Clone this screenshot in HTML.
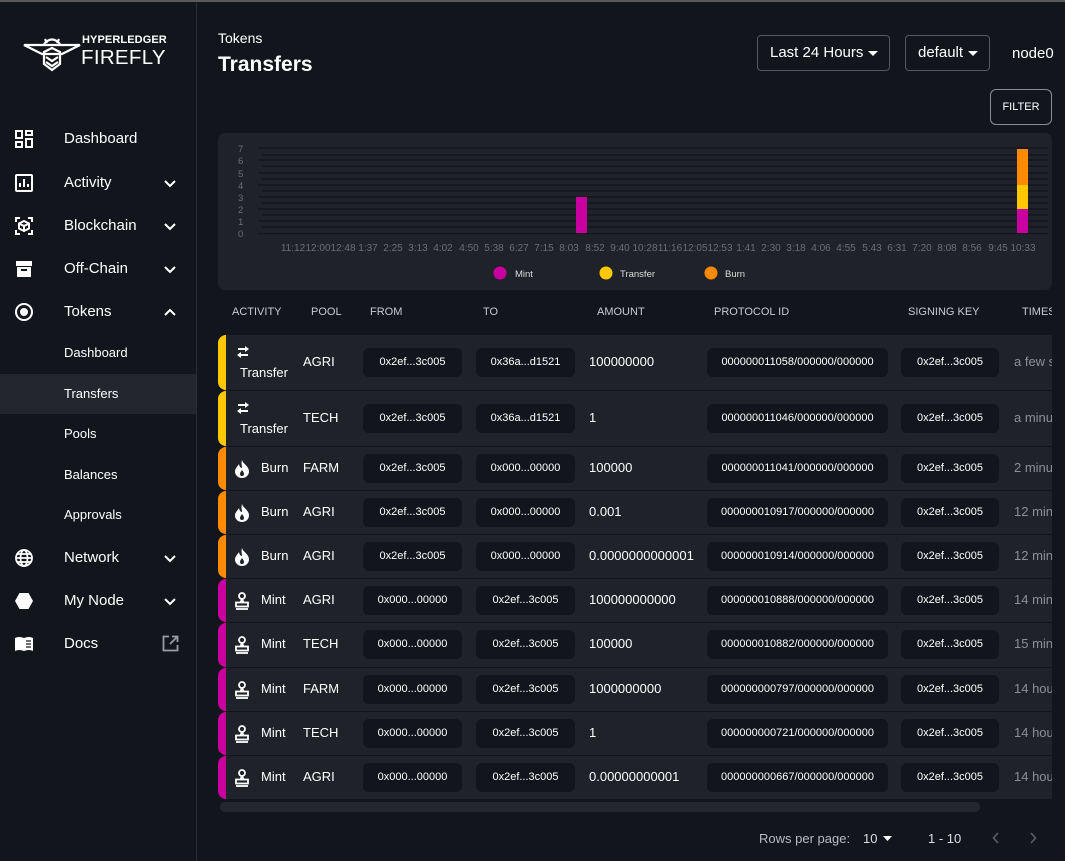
<!DOCTYPE html>
<html><head><meta charset="utf-8"><style>
*{box-sizing:border-box;margin:0;padding:0}
body{width:1065px;height:861px;overflow:hidden;background:#12161c;font-family:"Liberation Sans",sans-serif;color:#fff;position:relative}
.top{position:absolute;left:0;top:0;width:1065px;height:2px;background:#5a5a5a}
.side{position:absolute;left:0;top:2px;width:197px;height:859px;background:#12161c;border-right:1px solid #2a2d33}
.nav{position:absolute;left:0;width:196px;font-size:15px}
.nav .ic{position:absolute;left:14px;top:-9px;width:20px;height:20px}
.nav .lb{position:absolute;left:64px;top:-8px}
.nav .ch{position:absolute;left:163px;top:-6px}
.sub{position:absolute;left:0;width:196px;height:40px;font-size:13px;padding-left:64px;line-height:40px}
.abs{position:absolute}
.btn{position:absolute;border:1px solid #55585e;border-radius:4px;font-size:15px;line-height:34px;padding-left:12px}
.row{position:absolute;left:218px;width:834px;background:#1f2229;border-radius:8px 0 0 8px;overflow:hidden}
.row .bar{position:absolute;left:0;top:0;bottom:0;width:8px}
.chip{position:absolute;background:#12151b;border-radius:6px;height:29px;font-size:11px;text-align:center;line-height:29px}
.hd{position:absolute;top:306px;font-size:11px;color:#c8cad0}
.t{position:absolute;font-size:13px}
.ts{position:absolute;font-size:13px;color:#8c8f95;left:1014px;white-space:nowrap;overflow:hidden;width:38px}
</style></head><body>
<div class="top"></div>
<div class="side">
 <svg class="abs" style="left:22px;top:33px" width="60" height="38" viewBox="0 0 60 38" fill="none" stroke="#fff" stroke-width="2.2">
  <path d="M2 10 L58 10 L40 19 L20 19 Z"/><path d="M22 9 Q30 0 38 9"/><path d="M23 4 L25 8 M37 4 L35 8"/>
  <path d="M22 17 L30 13 L38 17 L38 29 L30 35 L22 29 Z"/><path d="M24 22 L30 26 L36 22 M24 27 L30 31 L36 27"/>
 </svg>
</div>
<div class="abs" style="left:82px;top:34px;font-size:11px;font-weight:bold;letter-spacing:0.1px">HYPERLEDGER</div>
<div class="abs" style="left:81px;top:46px;font-size:20.5px;letter-spacing:0.3px">FIREFLY</div>

<svg width="0" height="0" style="position:absolute"><defs><path id="cd" d="M2 5L7 10L12 5" fill="none" stroke="#fff" stroke-width="2"/><path id="cu" d="M2 10L7 5L12 10" fill="none" stroke="#fff" stroke-width="2"/></defs></svg>

<div class="nav" style="top:138px"><svg class="ic" viewBox="0 0 20 20" fill="none" stroke="#fff" stroke-width="2"><rect x="2" y="2" width="6" height="7"/><rect x="12" y="2" width="6" height="4"/><rect x="2" y="13" width="6" height="5"/><rect x="12" y="10" width="6" height="8"/></svg><span class="lb">Dashboard</span></div>
<div class="nav" style="top:182px"><svg class="ic" viewBox="0 0 20 20" fill="none" stroke="#fff" stroke-width="2"><rect x="2" y="2" width="16" height="16" rx="1"/><path d="M6 14V10M10 14V6M14 14V11"/></svg><span class="lb">Activity</span><svg class="ch" width="14" height="14"><use href="#cd"/></svg></div>
<div class="nav" style="top:225px"><svg class="ic" viewBox="0 0 20 20" fill="none" stroke="#fff" stroke-width="2"><path d="M2 6V2H6M14 2H18V6M2 14V18H6M14 18H18V14"/><path d="M10 5L15 7.5V12.5L10 15L5 12.5V7.5Z M5 7.5L10 10L15 7.5M10 10V15"/></svg><span class="lb">Blockchain</span><svg class="ch" width="14" height="14"><use href="#cd"/></svg></div>
<div class="nav" style="top:268px"><svg class="ic" viewBox="0 0 20 20" fill="#fff"><rect x="2" y="2" width="16" height="5"/><path d="M3 8H17V18H3Z M7 10V12H13V10Z" fill-rule="evenodd"/></svg><span class="lb">Off-Chain</span><svg class="ch" width="14" height="14"><use href="#cd"/></svg></div>
<div class="nav" style="top:311px"><svg class="ic" viewBox="0 0 20 20" fill="none" stroke="#fff" stroke-width="2"><circle cx="10" cy="10" r="8"/><circle cx="10" cy="10" r="3" fill="#fff"/></svg><span class="lb">Tokens</span><svg class="ch" width="14" height="14"><use href="#cu"/></svg></div>
<div class="sub" style="top:333px">Dashboard</div>
<div class="sub" style="top:374px;background:#23262d">Transfers</div>
<div class="sub" style="top:414px">Pools</div>
<div class="sub" style="top:455px">Balances</div>
<div class="sub" style="top:495px">Approvals</div>
<div class="nav" style="top:557px"><svg class="ic" viewBox="0 0 20 20" fill="none" stroke="#fff" stroke-width="1.8"><circle cx="10" cy="10" r="8"/><ellipse cx="10" cy="10" rx="3.5" ry="8"/><path d="M2 10H18M3.5 6H16.5M3.5 14H16.5"/></svg><span class="lb">Network</span><svg class="ch" width="14" height="14"><use href="#cd"/></svg></div>
<div class="nav" style="top:600px"><svg class="ic" viewBox="0 0 20 20" fill="#fff"><path d="M5.5 2H14.5L19 10L14.5 18H5.5L1 10Z"/></svg><span class="lb">My Node</span><svg class="ch" width="14" height="14"><use href="#cd"/></svg></div>
<div class="nav" style="top:643px"><svg class="ic" viewBox="0 0 20 20" fill="#fff"><path d="M1 4Q5 2 10 4V17Q5 15 1 17Z M10 4Q15 2 19 4V17Q15 15 10 17Z"/><path d="M12 7H17M12 10H17M12 13H17" stroke="#12161c" stroke-width="1.2"/></svg><span class="lb">Docs</span><svg class="abs" style="left:162px;top:-8px" width="17" height="17" viewBox="0 0 17 17" fill="none" stroke="#9a9ca1" stroke-width="1.8"><path d="M7 1.5H1.5V15.5H15.5V10M10 1.5H15.5V7M15.5 1.5L8 9"/></svg></div>

<div class="abs" style="left:218px;top:30px;font-size:14px">Tokens</div>
<div class="abs" style="left:218px;top:53px;font-size:21px;font-weight:bold">Transfers</div>
<div class="btn" style="left:757px;top:35px;width:133px;height:36px">Last 24 Hours<svg style="position:absolute;left:110px;top:15px" width="10" height="6"><path d="M0 0H10L5 5Z" fill="#fff"/></svg></div>
<div class="btn" style="left:905px;top:35px;width:85px;height:36px">default<svg style="position:absolute;left:62px;top:15px" width="10" height="6"><path d="M0 0H10L5 5Z" fill="#fff"/></svg></div>
<div class="abs" style="left:1012px;top:45px;font-size:15px">node0</div>
<div class="abs" style="left:990px;top:89px;width:62px;height:36px;border:1px solid #8a8c90;border-radius:6px;font-size:11px;text-align:center;line-height:34px">FILTER</div>

<div class="abs" style="left:218px;top:133px;width:834px;height:157px;background:#1f2229;border-radius:7px"></div>
<svg class="abs" style="left:218px;top:133px" width="834" height="157" viewBox="218 133 834 157" font-family="Liberation Sans" font-size="10" fill="#6c6f75">
 <g stroke="#12151b" stroke-width="1.2">
  <line x1="258" y1="148" x2="1048" y2="148"/><line x1="262" y1="155" x2="1048" y2="155"/><line x1="258" y1="160" x2="1048" y2="160"/><line x1="262" y1="166" x2="1048" y2="166"/><line x1="258" y1="173" x2="1048" y2="173"/><line x1="262" y1="179" x2="1048" y2="179"/><line x1="258" y1="185" x2="1048" y2="185"/><line x1="262" y1="191" x2="1048" y2="191"/><line x1="258" y1="197" x2="1048" y2="197"/><line x1="262" y1="203" x2="1048" y2="203"/><line x1="258" y1="209" x2="1048" y2="209"/><line x1="262" y1="215" x2="1048" y2="215"/><line x1="258" y1="221" x2="1048" y2="221"/><line x1="262" y1="227" x2="1048" y2="227"/><line x1="258" y1="233.5" x2="1048" y2="233.5"/>
 </g>
 <g font-size="9.5"><text x="238" y="152">7</text><text x="238" y="164">6</text><text x="238" y="177">5</text><text x="238" y="189">4</text><text x="238" y="201">3</text><text x="238" y="213">2</text><text x="238" y="225">1</text><text x="238" y="237">0</text></g>
 <rect x="576" y="197" width="11" height="36" fill="#c9009f"/>
 <rect x="1017" y="209" width="11" height="24" fill="#c9009f"/>
 <rect x="1017" y="185" width="11" height="24" fill="#ffc800"/>
 <rect x="1017" y="149" width="11" height="36" fill="#ff8a00"/>
 <g text-anchor="middle">
 <text x="293" y="251">11:12</text><text x="318" y="251">12:00</text><text x="343" y="251">12:48</text><text x="368" y="251">1:37</text><text x="393" y="251">2:25</text><text x="418" y="251">3:13</text><text x="443" y="251">4:02</text><text x="469" y="251">4:50</text><text x="494" y="251">5:38</text><text x="519" y="251">6:27</text><text x="544" y="251">7:15</text><text x="569" y="251">8:03</text><text x="595" y="251">8:52</text><text x="620" y="251">9:40</text><text x="645" y="251">10:28</text><text x="670" y="251">11:16</text><text x="695" y="251">12:05</text><text x="720" y="251">12:53</text><text x="746" y="251">1:41</text><text x="771" y="251">2:30</text><text x="796" y="251">3:18</text><text x="821" y="251">4:06</text><text x="846" y="251">4:55</text><text x="872" y="251">5:43</text><text x="897" y="251">6:31</text><text x="922" y="251">7:20</text><text x="947" y="251">8:08</text><text x="972" y="251">8:56</text><text x="998" y="251">9:45</text><text x="1023" y="251">10:33</text>
 </g>
 <g fill="#ddd" font-size="9.5">
 <circle cx="500" cy="273" r="6.5" fill="#c9009f"/><text x="515" y="277">Mint</text>
 <circle cx="606" cy="273" r="6.5" fill="#ffc800"/><text x="620" y="277">Transfer</text>
 <circle cx="711" cy="273" r="6.5" fill="#ff8a00"/><text x="725" y="277">Burn</text>
 </g>
</svg>

<div class="hd" style="left:232px">ACTIVITY</div><div class="hd" style="left:311px">POOL</div><div class="hd" style="left:370px">FROM</div><div class="hd" style="left:483px">TO</div><div class="hd" style="left:597px">AMOUNT</div><div class="hd" style="left:714px">PROTOCOL ID</div><div class="hd" style="left:908px">SIGNING KEY</div><div class="hd" style="left:1022px;width:30px;overflow:hidden;white-space:nowrap">TIMESTAMP</div>

<div id="rows"></div>
<script>
const T='<svg width="18" height="14" viewBox="0 0 18 14" fill="#fff"><path d="M11 1l4 3-4 3V5H4V3h7zM7 7v2h7v2H7v2L3 10z"/></svg>';
const B='<svg width="16" height="18" viewBox="0 0 16 18" fill="#fff"><path d="M8 0C9 4 15 6 15 11.5A7 6.5 0 0 1 1 11.5C1 8 4 6 5 4C5.5 7 7 8 8 8C8 6 7 3 8 0ZM8 10C6.5 12 6 13 6 14A2 2 0 0 0 10 14C10 13 9.5 12 8 10Z" fill-rule="evenodd"/></svg>';
const M='<svg width="16" height="18" viewBox="0 0 16 18" fill="none" stroke="#fff" stroke-width="1.8"><circle cx="8" cy="4" r="3"/><path d="M8 7L6.5 10.5M8 7L9.5 10.5"/><rect x="2" y="10.5" width="12" height="4"/><path d="M2 17H14"/></svg>';
const C={T:'#ffc800',B:'#ff8a00',M:'#c9009f'};
const rows=[
['T',335,55,'AGRI','0x2ef...3c005','0x36a...d1521','100000000','000000011058/000000/000000','a few seconds'],
['T',391,55,'TECH','0x2ef...3c005','0x36a...d1521','1','000000011046/000000/000000','a minute'],
['B',447,43,'FARM','0x2ef...3c005','0x000...00000','100000','000000011041/000000/000000','2 minutes'],
['B',491,43,'AGRI','0x2ef...3c005','0x000...00000','0.001','000000010917/000000/000000','12 minutes'],
['B',535,43,'AGRI','0x2ef...3c005','0x000...00000','0.0000000000001','000000010914/000000/000000','12 minutes'],
['M',579,43,'AGRI','0x000...00000','0x2ef...3c005','100000000000','000000010888/000000/000000','14 minutes'],
['M',623,44,'TECH','0x000...00000','0x2ef...3c005','100000','000000010882/000000/000000','15 minutes'],
['M',668,43,'FARM','0x000...00000','0x2ef...3c005','1000000000','000000000797/000000/000000','14 hours'],
['M',712,43,'TECH','0x000...00000','0x2ef...3c005','1','000000000721/000000/000000','14 hours'],
['M',756,43,'AGRI','0x000...00000','0x2ef...3c005','0.00000000001','000000000667/000000/000000','14 hours']];
let h='';
for(const r of rows){const [k,y,ht,pool,f,t,a,p,ts]=r;const c=y+ht/2;
h+=`<div class="row" style="top:${y}px;height:${ht}px"><div class="bar" style="background:${C[k]}"></div></div>`;
if(k==='T'){h+=`<div class="abs" style="left:234px;top:${y+10}px">${T}</div><div class="t" style="left:240px;top:${y+30}px">Transfer</div>`;}
else{h+=`<div class="abs" style="left:234px;top:${c-9}px">${k==='B'?B:M}</div><div class="t" style="left:261px;top:${c-9}px">${k==='B'?'Burn':'Mint'}</div>`;}
h+=`<div class="t" style="left:303px;top:${c-9}px">${pool}</div>`;
h+=`<div class="chip" style="left:363px;width:99px;top:${c-15}px">${f}</div>`;
h+=`<div class="chip" style="left:476px;width:99px;top:${c-15}px">${t}</div>`;
h+=`<div class="t" style="left:589px;top:${c-9}px">${a}</div>`;
h+=`<div class="chip" style="left:707px;width:181px;top:${c-15}px">${p}</div>`;
h+=`<div class="chip" style="left:901px;width:98px;top:${c-15}px">0x2ef...3c005</div>`;
h+=`<div class="ts" style="top:${c-9}px">${ts}</div>`;}
document.getElementById('rows').innerHTML=h;
</script>
<div class="abs" style="left:220px;top:802px;width:760px;height:10px;background:#24272e;border-radius:5px"></div>
<div class="abs" style="left:759px;top:831px;font-size:13px;color:#b8bbc0">Rows per page:</div>
<div class="abs" style="left:863px;top:831px;font-size:13px;color:#ddd">10</div>
<svg class="abs" style="left:883px;top:836px" width="9" height="5"><path d="M0 0H9L4.5 5Z" fill="#fff"/></svg>
<div class="abs" style="left:928px;top:831px;font-size:13px;color:#ddd">1 - 10</div>
<svg class="abs" style="left:992px;top:832px" width="8" height="12"><path d="M6 1L1.5 6L6 11" fill="none" stroke="#5b5e64" stroke-width="1.6"/></svg>
<svg class="abs" style="left:1029px;top:832px" width="8" height="12"><path d="M2 1L6.5 6L2 11" fill="none" stroke="#5b5e64" stroke-width="1.6"/></svg>
</body></html>
